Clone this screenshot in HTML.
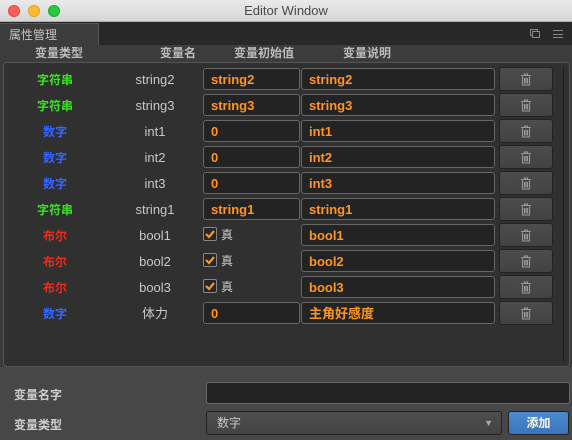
<!DOCTYPE html>
<html><head><meta charset="utf-8"><style>
*{box-sizing:border-box;margin:0;padding:0}
body{width:572px;height:440px;background:#3a3a3a;font-family:"Liberation Sans","Noto Sans CJK SC",sans-serif;font-size:12px;position:relative;overflow:hidden}
.a{position:absolute}
.title{left:0;top:0;width:572px;height:22px;background:linear-gradient(#ebebeb,#d6d6d6);border-bottom:1px solid #b0b0b0;text-align:center;line-height:22px;color:#4a4a4a;font-size:13px}
.dot{top:5px;width:12px;height:12px;border-radius:6px}
.tabbar{left:0;top:22px;width:572px;height:23px;background:#282828}
.tab{left:0;top:23px;width:99px;height:22px;background:#3c3c3c;border-top:1px solid #555;border-right:1px solid #555;color:#c4c4c4;padding-left:9px;line-height:22px;font-size:12px}
.hdr{left:0;top:45px;width:572px;height:18px;background:#3c3c3c;color:#bcbcbc;font-weight:bold;font-size:12px}
.hdr span{position:absolute;top:0;line-height:17px;transform:translateX(-50%)}
.panel{left:3px;top:62px;width:567px;height:305px;background:#303030;border:1px solid #555;border-radius:4px}
.sb{left:563px;top:67px;width:1px;height:295px;background:#1c1c1c}
.row{position:absolute;left:0;width:572px;height:26px}
.t{position:absolute;top:2px;line-height:24px;transform:translateX(-50%);font-weight:bold;font-size:12px}
.n{position:absolute;top:2px;line-height:24px;transform:translateX(-50%);color:#c8c8c8;font-size:13px}
.in{position:absolute;top:2px;height:22px;background:#232323;border:1px solid #666;border-radius:3px;color:#ff9420;font-weight:bold;font-size:13px;line-height:21px;padding-left:7px}
.btn{position:absolute;left:499px;top:1px;width:54px;height:24px;background:linear-gradient(#4c4c4c,#424242);border:1px solid #222;border-radius:3px}
.btn svg{position:absolute;left:20px;top:5px}
.cb{position:absolute;left:203px;top:5px;width:14px;height:14px;border:1px solid #888;background:#262626;border-radius:2px}
.zh{position:absolute;left:221px;top:1px;line-height:24px;color:#c8c8c8;font-size:12px}
.g{color:#35e61a}.b{color:#3564ff}.r{color:#ee2a1a}
.bottom{left:0;top:367px;width:572px;height:73px;background:#474747}
.lbl{color:#cfcfcf;font-size:12px;font-weight:bold;left:14px}
</style></head><body>
<div class="a title">Editor Window</div>
<div class="a dot" style="left:8px;background:#fc5f57;border:1px solid #de4a42"></div>
<div class="a dot" style="left:28px;background:#fdbc2e;border:1px solid #dea123"></div>
<div class="a dot" style="left:48px;background:#28c840;border:1px solid #1daa30"></div>
<div class="a tabbar"></div>
<div class="a tab">属性管理</div>
<div class="a" style="left:530px;top:29px;width:8px;height:7px;border:1px solid #888"></div>
<div class="a" style="left:532px;top:31px;width:8px;height:7px;border:1px solid #888;background:#282828"></div>
<div class="a" style="left:553px;top:30px;width:10px;height:8px;border-top:1px solid #888;border-bottom:1px solid #888"></div>
<div class="a" style="left:553px;top:34px;width:10px;height:1px;background:#888"></div>
<div class="a hdr"><span style="left:59px">变量类型</span><span style="left:178px">变量名</span><span style="left:264px">变量初始值</span><span style="left:367px">变量说明</span></div>
<div class="a panel"></div>
<div class="a sb"></div>
<div id="rows"></div>
<div class="a bottom"></div>
<div class="a lbl" style="top:386px">变量名字</div>
<div class="a lbl" style="top:416px">变量类型</div>
<div class="a" style="left:206px;top:382px;width:364px;height:22px;background:#232323;border:1px solid #666;border-radius:3px"></div>
<div class="a" style="left:206px;top:411px;width:296px;height:24px;background:linear-gradient(#4e4e4e,#444);border:1px solid #222;border-radius:3px;color:#c8c8c8;font-size:12px;line-height:22px;padding-left:10px">数字<span style="position:absolute;right:8px;top:0;font-size:9px;color:#aaa">▼</span></div>
<div class="a" style="left:508px;top:411px;width:61px;height:24px;background:linear-gradient(#4a8bd0,#3a74b8);border:1px solid #222;border-radius:3px;color:#fff;font-weight:bold;font-size:12px;text-align:center;line-height:22px">添加</div>
<script>
var d=[["字符串","g","string2","string2","string2"],["字符串","g","string3","string3","string3"],["数字","b","int1","0","int1"],["数字","b","int2","0","int2"],["数字","b","int3","0","int3"],["字符串","g","string1","string1","string1"],["布尔","r","bool1",null,"bool1"],["布尔","r","bool2",null,"bool2"],["布尔","r","bool3",null,"bool3"],["数字","b","体力","0","主角好感度"]];
var h="";
var ico='<svg width="12" height="13" viewBox="0 0 12 13"><path d="M1 2.5h10M4.5 2.5V1h3v1.5M2.5 3.5v8.5h7V3.5M4.5 5v5.5M6 5v5.5M7.5 5v5.5" stroke="#9a9a9a" stroke-width="1.1" fill="none"/></svg>';
d.forEach(function(r,i){
 h+='<div class="row" style="top:'+(66+i*26)+'px"><div class="t '+r[1]+'" style="left:55px">'+r[0]+'</div><div class="n" style="left:155px">'+r[2]+'</div>';
 if(r[3]===null)h+='<div class="cb"><svg width="12" height="12" viewBox="0 0 12 12" style="position:absolute;left:0;top:0"><path d="M2 6l3 3 5-6" stroke="#ff9420" stroke-width="2.2" fill="none"/></svg></div><div class="zh">真</div>';
 else h+='<div class="in" style="left:203px;width:97px">'+r[3]+'</div>';
 h+='<div class="in" style="left:301px;width:194px">'+r[4]+'</div><div class="btn">'+ico+'</div></div>';
});
document.getElementById("rows").innerHTML=h;
</script>
</body></html>
